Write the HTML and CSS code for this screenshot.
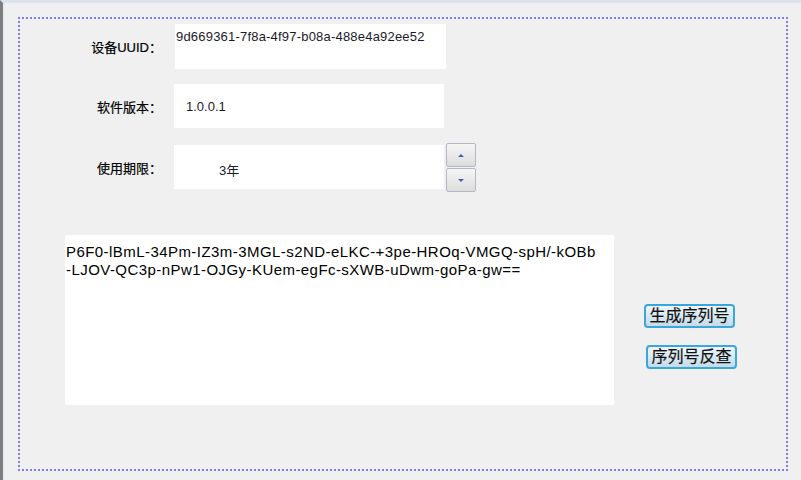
FILE: index.html
```html
<!DOCTYPE html>
<html lang="zh-CN">
<head>
  <meta charset="UTF-8">
  <title>序列号生成</title>
  <link rel="stylesheet" href="styles.css">
</head>
<body>

  <div class="window">
    <div class="frame">

      <div class="form">
        <div class="row">
          <div class="label">设备UUID：</div>
          <div class="field field-top">9d669361-7f8a-4f97-b08a-488e4a92ee52</div>
        </div>

        <div class="row row-version">
          <div class="label">软件版本：</div>
          <div class="field field-version">1.0.0.1</div>
        </div>

        <div class="row row-period">
          <div class="label">使用期限：</div>
          <div class="field field-period">3年</div>
          <div class="spin">
            <div class="spin-btn"><span class="arrow-up"></span></div>
            <div class="spin-btn"><span class="arrow-down"></span></div>
          </div>
        </div>
      </div>

      <div class="bottom">
        <div class="serial">P6F0-lBmL-34Pm-IZ3m-3MGL-s2ND-eLKC-+3pe-HROq-VMGQ-spH/-kOBb<br>-LJOV-QC3p-nPw1-OJGy-KUem-egFc-sXWB-uDwm-goPa-gw==</div>
        <div class="actions">
          <button class="btn">生成序列号</button>
          <button class="btn btn-second">序列号反查</button>
        </div>
      </div>

    </div>
  </div>

</body>
</html>
```

FILE: styles.css
```css
html, body {
  margin: 0;
  padding: 0;
  background-color: #f0f0f0;
}

body {
  font-family: "Liberation Sans", "Noto Sans CJK SC", sans-serif;
  color: #111;
}

.window {
  height: 477px;
  border-left: 3px solid #7d7d7d;
  border-top: 3px solid #dbe4ee;
  box-shadow: inset 2px 0 0 #e6ebf1;
  padding: 14px 12px 0 15px;
}

.frame {
  height: 450px;
  width: 766px;
  border: 2px dotted #7f7ff5;
}

.form {
  padding-top: 5px;
}

.row {
  display: flex;
  align-items: center;
  height: 45px;
}

.row-version {
  margin-top: 15px;
  height: 44px;
}

.row-period {
  margin-top: 17px;
  height: 44px;
}

.label {
  width: 142px;
  text-align: right;
  font-size: 13px;
  margin-right: 12px;
  color: #000;
  -webkit-text-stroke: 0.2px #000;
}

.field {
  width: 270px;
  height: 100%;
  background-color: #fff;
  font-size: 13px;
  box-sizing: border-box;
  display: flex;
  align-items: center;
  color: #1a1a2a;
}

.field-top {
  width: 271px;
  margin-left: 1px;
  align-items: flex-start;
  padding: 5px 0 0 1px;
  letter-spacing: 0.2px;
}

.field-version {
  padding-left: 12px;
}

.field-period {
  padding: 4px 0 0 45px;
}

.spin {
  display: flex;
  flex-direction: column;
  gap: 1px;
  margin-left: 2px;
  align-self: flex-start;
  margin-top: -2px;
}

.spin-btn {
  width: 28px;
  height: 22px;
  border: 1px solid #b4b8c2;
  border-radius: 2px;
  background: linear-gradient(#f6f6f6, #dcdcdc);
  display: flex;
  align-items: center;
  justify-content: center;
}

.arrow-up {
  border-left: 3px solid transparent;
  border-right: 3px solid transparent;
  border-bottom: 3px solid #4b5fa8;
}

.arrow-down {
  border-left: 3px solid transparent;
  border-right: 3px solid transparent;
  border-top: 3px solid #4b5fa8;
}

.bottom {
  display: flex;
  margin-top: 46px;
  padding-left: 45px;
}

.serial {
  width: 549px;
  height: 170px;
  box-sizing: border-box;
  background-color: #fff;
  font-size: 15px;
  letter-spacing: 0.44px;
  line-height: 18px;
  padding: 8px 0 0 1px;
  color: #000;
}

.actions {
  display: flex;
  flex-direction: column;
  align-items: flex-start;
  padding: 69px 0 0 30px;
}

.btn {
  font-family: "Liberation Sans", "Noto Sans CJK SC", sans-serif;
  font-size: 16px;
  color: #111;
  width: 91px;
  height: 24px;
  padding: 0;
  border: 2px solid #3aa6dc;
  border-radius: 4px;
  background: linear-gradient(#eef7fc, #d6e7f1 55%, #c6dbe8);
  line-height: 18px;
  -webkit-text-stroke: 0.2px #111;
}

.btn-second {
  margin-top: 17px;
  margin-left: 2px;
}
```
